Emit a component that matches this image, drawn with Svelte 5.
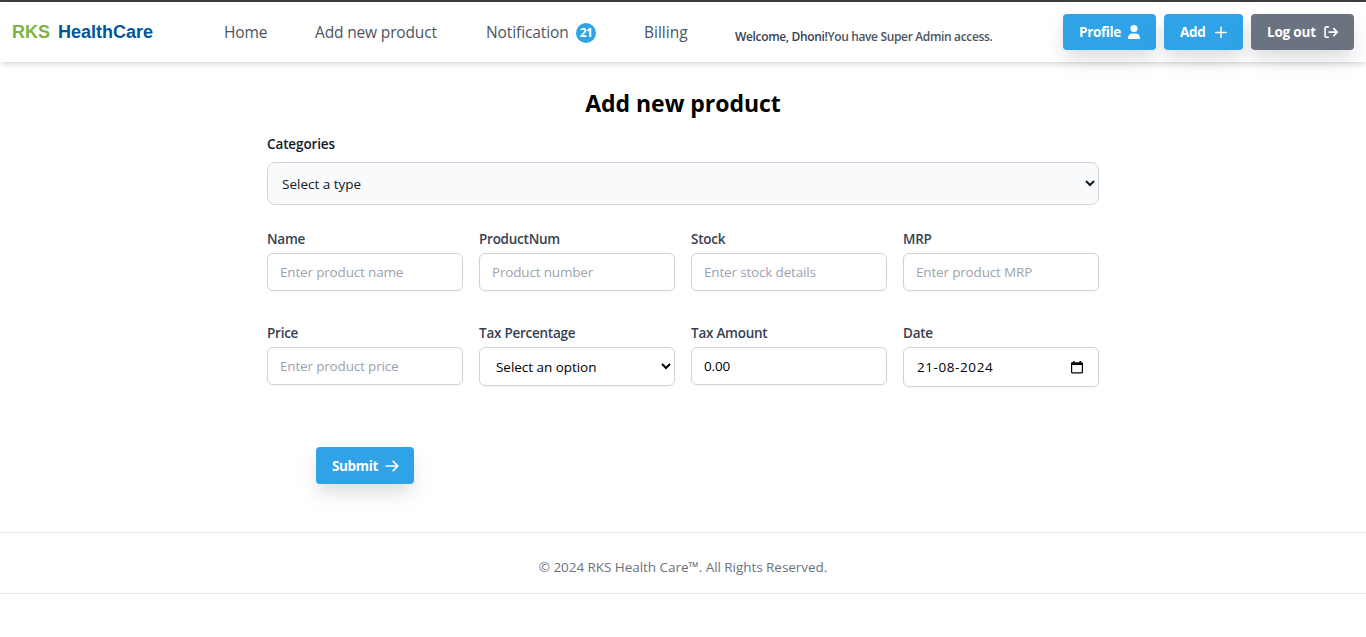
<script>
  const rows = [
    [
      { label: 'Name', placeholder: 'Enter product name' },
      { label: 'ProductNum', placeholder: 'Product number' },
      { label: 'Stock', placeholder: 'Enter stock details' },
      { label: 'MRP', placeholder: 'Enter product MRP' }
    ],
    [
      { label: 'Price', placeholder: 'Enter product price' },
      { label: 'Tax Percentage', kind: 'select' },
      { label: 'Tax Amount', value: '0.00' },
      { label: 'Date', kind: 'date', value: '21-08-2024' }
    ]
  ];
</script>

<div class="page">
  <header>
    <div class="brand"><span class="rks">RKS</span><span class="health">HealthCare</span></div>
    <nav>
      <a class="home" href="#home">Home</a>
      <a class="add" href="#add">Add new product</a>
      <a class="notification" href="#notification"><span>Notification</span><b>21</b></a>
      <a class="billing" href="#billing">Billing</a>
    </nav>
    <p class="welcome"><span class="hello">Welcome, Dhoni!</span><span>You have Super Admin access.</span></p>
    <div class="actions">
      <button class="profile"><span>Profile</span>
        <svg width="14" height="16" viewBox="0 0 14 16"><circle cx="7" cy="4.5" r="3.6" fill="currentColor" /><path d="M1 15v-1C1 11.300 2.900 9.400 5.400 9.400h3.200C11.100 9.400 13 11.300 13 14v1z" fill="currentColor" /></svg>
      </button>
      <button class="plus"><span>Add</span>
        <svg width="14" height="16" viewBox="0 0 14 16" fill="none" stroke="currentColor" stroke-width="1.5" stroke-linecap="round"><path d="M7 3.200v10.400M1.800 8.400h10.400" /></svg>
      </button>
      <button class="logout"><span>Log out</span>
        <svg width="16" height="16" viewBox="0 0 16 16" fill="none" stroke="currentColor" stroke-width="1.6" stroke-linecap="round" stroke-linejoin="round"><path d="M5.200 2.900H3.500c-.8 0-1.500.7-1.500 1.500v7.400c0 .8.7 1.500 1.500 1.500h1.700M6 8.100h8.200M10.800 4.600l3.500 3.500-3.500 3.500" /></svg>
      </button>
    </div>
  </header>

  <main>
    <h1>Add new product</h1>
    <label class="cat-label" for="category">Categories</label>
    <select id="category" class="category"><option>Select a type</option></select>

    {#each rows as row}
      <div class="row">
        {#each row as field}
          <div class="field">
            <span class="label">{field.label}</span>
            {#if field.kind === 'select'}
              <select class="box tax"><option>Select an option</option></select>
            {:else if field.kind === 'date'}
              <div class="box date"><span>{field.value}</span>
                <svg width="12" height="13" viewBox="0 0 12 13"><path fill="currentColor" fill-rule="evenodd" d="M2 0h1.500v1.200h5V0H10v1.200h.8c.7 0 1.200.5 1.200 1.200v8.900c0 .7-.5 1.200-1.200 1.200H1.200C.5 12.500 0 12 0 11.300V2.400C0 1.700.5 1.200 1.200 1.200H2zM1.200 4v7.300h9.600V4z" /></svg>
              </div>
            {:else}
              <input class="box" placeholder={field.placeholder} value={field.value ?? ''} />
            {/if}
          </div>
        {/each}
      </div>
    {/each}

    <button class="submit"><span>Submit</span>
      <svg width="14" height="14" viewBox="0 0 14 14" fill="none" stroke="currentColor" stroke-width="1.7" stroke-linecap="round" stroke-linejoin="round"><path d="M1.200 7h11.400M8.200 2.400L12.800 7l-4.600 4.600" /></svg>
    </button>
  </main>

  <footer>© 2024 RKS Health Care™. All Rights Reserved.</footer>
</div>

<style>
  :global(body) { margin: 0; background: #fff; overflow: hidden; }
  .page { box-sizing: border-box; height: 637px; border-top: 2px solid #3c3c3c; font-family: 'Open Sans', 'Noto Sans', sans-serif; }
  .page * { box-sizing: border-box; }
  header { display: flex; align-items: center; height: 60px; padding: 0 12px; box-shadow: 0 4px 6px -1px rgba(0,0,0,.1), 0 2px 4px -2px rgba(0,0,0,.1); white-space: nowrap; }
  .brand { display: flex; width: 212px; gap: 8px; font: bold 18px/28px 'Liberation Sans', Arial, sans-serif; }
  .rks { width: 38px; color: #7cb342; }
  .health { color: #01579b; }
  nav { display: flex; gap: 48px; font-size: 15.500px; line-height: 24px; font-weight: 400; letter-spacing: -.15px; }
  nav a { color: #4b5563; text-decoration: none; }
  .home { width: 43px; }
  .add { width: 123px; }
  .notification { display: flex; align-items: center; width: 110px; justify-content: space-between; letter-spacing: -.1px; }
  .notification b { width: 20px; height: 20px; margin-top: 1px; border-radius: 50%; background: #30a3e6; color: #fff; font-size: 12px; line-height: 20px; font-weight: 700; text-align: center; letter-spacing: -.6px; }
  .billing { width: 43px; letter-spacing: 0; }
  .welcome { margin: 10px 0 0 48px; font-size: 12px; line-height: 16px; font-weight: 600; color: #4b5563; letter-spacing: -.35px; }
  .hello { color: #374151; }
  .actions { display: flex; gap: 8px; margin-left: auto; }
  button { display: flex; align-items: center; justify-content: space-between; height: 36px; padding: 0 15px 0 16px; border: 0; border-radius: 4px; background: #30a3e6; color: #fff; font: 700 13.500px/20px 'Open Sans', sans-serif; letter-spacing: -.35px; box-shadow: 0 10px 15px -3px rgba(0,0,0,.07), 0 10px 24px rgba(0,0,0,.08); white-space: nowrap; }
  .profile { width: 93px; }
  .plus { width: 79px; }
  .logout { width: 103px; background: #6b7280; letter-spacing: -.2px; }
  main { width: 832px; height: 470px; margin: 0 auto; padding-top: 25px; }
  h1 { margin: 0; font-size: 23px; line-height: 32px; font-weight: 700; text-align: center; letter-spacing: -.03px; }
  .cat-label { display: block; margin-top: 15px; font-size: 13.500px; line-height: 20px; font-weight: 600; color: #111827; letter-spacing: -.12px; }
  .category { display: block; width: 100%; height: 43px; margin-top: 8px; padding: 0 11px 0 10px; border: 1px solid #d1d5db; border-radius: 8px; background: #f9fafb; color: #111827; font: 13.500px 'Open Sans', sans-serif; letter-spacing: 0; }
  .row { display: grid; grid-template-columns: repeat(4, 196px); gap: 16px; height: 94px; }
  .category + .row { margin-top: 24px; }
  .field { display: flex; flex-direction: column; }
  .label { height: 24px; font-size: 13.500px; line-height: 20px; font-weight: 600; color: #374151; letter-spacing: -.25px; }
  .box { width: 100%; height: 38px; padding: 0 12px; border: 1px solid #d1d5db; border-radius: 6px; background: #fff; color: #000; box-shadow: 0 1px 2px rgba(0,0,0,.05); font: 13.500px 'Open Sans', sans-serif; letter-spacing: -.17px; }
  .box::placeholder { color: #9ca3af; opacity: 1; }
  .tax { height: 39px; letter-spacing: -.04px; }
  .date { display: flex; align-items: center; justify-content: space-between; height: 40px; padding: 0 15px 0 13px; letter-spacing: .58px; }
  .submit { width: 98px; height: 37px; margin: 30px 0 0 49px; }
  footer { height: 62px; border-top: 1px solid #e5e7eb; border-bottom: 1px solid #e5e7eb; padding-top: 24px; text-align: center; font-size: 13.500px; line-height: 20px; color: #6b7280; letter-spacing: -.05px; }
</style>
